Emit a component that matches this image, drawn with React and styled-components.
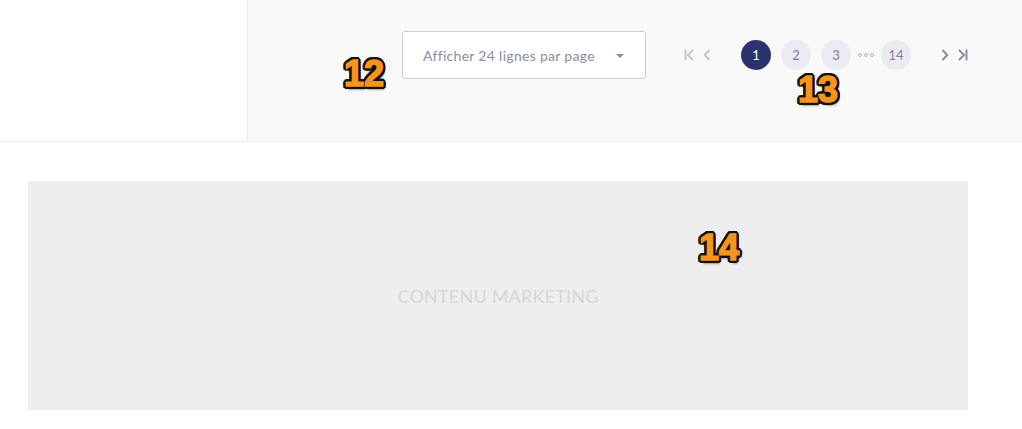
import React from "react";
import styled, { createGlobalStyle } from "styled-components";

const Global = createGlobalStyle`
  html, body { margin: 0; padding: 0; background: #ffffff; }
  body { font-family: Lato, "Noto Sans", sans-serif; }
  * { box-sizing: border-box; }
`;

const Page = styled.div`
  position: relative;
  width: 1022px;
  height: 429px;
  overflow: hidden;
`;

const Header = styled.header`
  display: flex;
  height: 142px;
  border-bottom: 1px solid #ececec;
`;

const Side = styled.div`
  width: 248px;
  background: #ffffff;
  border-right: 1px solid #ececec;
`;

const Toolbar = styled.div`
  flex: 1;
  background: #f9f9f9;
  display: flex;
  align-items: flex-start;
  padding: 31px 0 0 154px;
`;

const Select = styled.div`
  width: 244px;
  height: 48px;
  background: #ffffff;
  border: 1px solid #cbcbd8;
  border-radius: 3px;
  display: flex;
  align-items: center;
  justify-content: space-between;
  padding: 0 21px 0 20px;
  color: #8c8ca0;
  font-size: 14px;
  letter-spacing: 0.3px;
`;

const Caret = styled.span`
  width: 0;
  height: 0;
  border-left: 4px solid transparent;
  border-right: 4px solid transparent;
  border-top: 4px solid #8c8ca0;
  margin-top: 1px;
`;

const Pager = styled.nav`
  height: 48px;
  display: flex;
  align-items: center;
  margin-left: 38px;
`;

const Arrow = styled.span`
  display: inline-flex;
  align-items: center;
  justify-content: center;
  width: ${(p) => p.$w || 10}px;
  margin-right: ${(p) => p.$mr || 0}px;
  color: ${(p) => (p.$disabled ? "#c4c4d2" : "#8c8ca0")};
  svg { display: block; }
`;

const Pages = styled.div`
  display: flex;
  align-items: center;
  gap: 10px;
  margin: 0 30px;
`;

const PageBtn = styled.span`
  width: 30px;
  height: 30px;
  border-radius: 50%;
  display: inline-flex;
  align-items: center;
  justify-content: center;
  font-size: 13px;
  background: ${(p) => (p.$active ? "#2b3270" : "#ebebf3")};
  color: ${(p) => (p.$active ? "#ffffff" : "#7d7d96")};
`;

const Dots = styled.span`
  display: inline-flex;
  gap: 2px;
  margin: 0 -3px;
  span {
    width: 4px;
    height: 4px;
    border: 1px solid #b4b4c4;
    border-radius: 50%;
  }
`;

const Marketing = styled.section`
  margin: 39px 0 0 28px;
  width: 940px;
  height: 229px;
  background: #eeeeee;
  display: flex;
  align-items: center;
  justify-content: center;
  color: #d6d6d6;
  font-size: 18px;
  letter-spacing: 0.2px;
  padding-top: 1px;
`;

const Badge = styled.span`
  position: absolute;
  left: ${(p) => p.$x}px;
  top: ${(p) => p.$y}px;
  font-family: "Liberation Sans", Arial, sans-serif;
  font-weight: 700;
  font-size: 36px;
  line-height: 1;
  letter-spacing: 0px;
  color: #f7941d;
  -webkit-text-stroke: 1.5px #f7941d;
  text-shadow:
    3px 0 0 #111, -3px 0 0 #111, 0 3px 0 #111, 0 -3px 0 #111,
    2.2px 2.2px 0 #111, -2.2px 2.2px 0 #111, 2.2px -2.2px 0 #111, -2.2px -2.2px 0 #111,
    3px 1.5px 0 #111, -3px 1.5px 0 #111, 3px -1.5px 0 #111, -3px -1.5px 0 #111,
    1.5px 3px 0 #111, -1.5px 3px 0 #111, 1.5px -3px 0 #111, -1.5px -3px 0 #111,
    2px 4px 2px rgba(0, 0, 0, 0.35);
`;

const Chevron = ({ dir }) => (
  <svg width="8" height="12" viewBox="0 0 8 12" fill="none" stroke="currentColor" strokeWidth="2" strokeLinecap="round" strokeLinejoin="round">
    {dir === "left" ? <path d="M6 1.5 1.8 6 6 10.5" /> : <path d="M2 1.5 6.2 6 2 10.5" />}
  </svg>
);

const Edge = ({ dir }) => (
  <svg width="10" height="12" viewBox="0 0 10 12" fill="none" stroke="currentColor" strokeWidth="2" strokeLinecap="round" strokeLinejoin="round">
    {dir === "left" ? (
      <>
        <path d="M1.5 1.5v9" />
        <path d="M8.5 1.5 4 6l4.5 4.5" />
      </>
    ) : (
      <>
        <path d="M8.5 1.5v9" />
        <path d="M1.5 1.5 6 6l-4.5 4.5" />
      </>
    )}
  </svg>
);

export default function App() {
  return (
    <Page>
      <Global />
      <Header>
        <Side />
        <Toolbar>
          <Select>
            <span>Afficher 24 lignes par page</span>
            <Caret />
          </Select>
          <Pager>
            <Arrow $disabled $w={10} $mr={9}>
              <Edge dir="left" />
            </Arrow>
            <Arrow $disabled $w={8}>
              <Chevron dir="left" />
            </Arrow>
            <Pages>
              <PageBtn $active>1</PageBtn>
              <PageBtn>2</PageBtn>
              <PageBtn>3</PageBtn>
              <Dots>
                <span />
                <span />
                <span />
              </Dots>
              <PageBtn>14</PageBtn>
            </Pages>
            <Arrow $w={8} $mr={9}>
              <Chevron dir="right" />
            </Arrow>
            <Arrow $w={10}>
              <Edge dir="right" />
            </Arrow>
          </Pager>
        </Toolbar>
      </Header>
      <Marketing>CONTENU MARKETING</Marketing>
      <Badge $x={344} $y={56}>12</Badge>
      <Badge $x={798} $y={72}>13</Badge>
      <Badge $x={699} $y={230}>14</Badge>
    </Page>
  );
}
